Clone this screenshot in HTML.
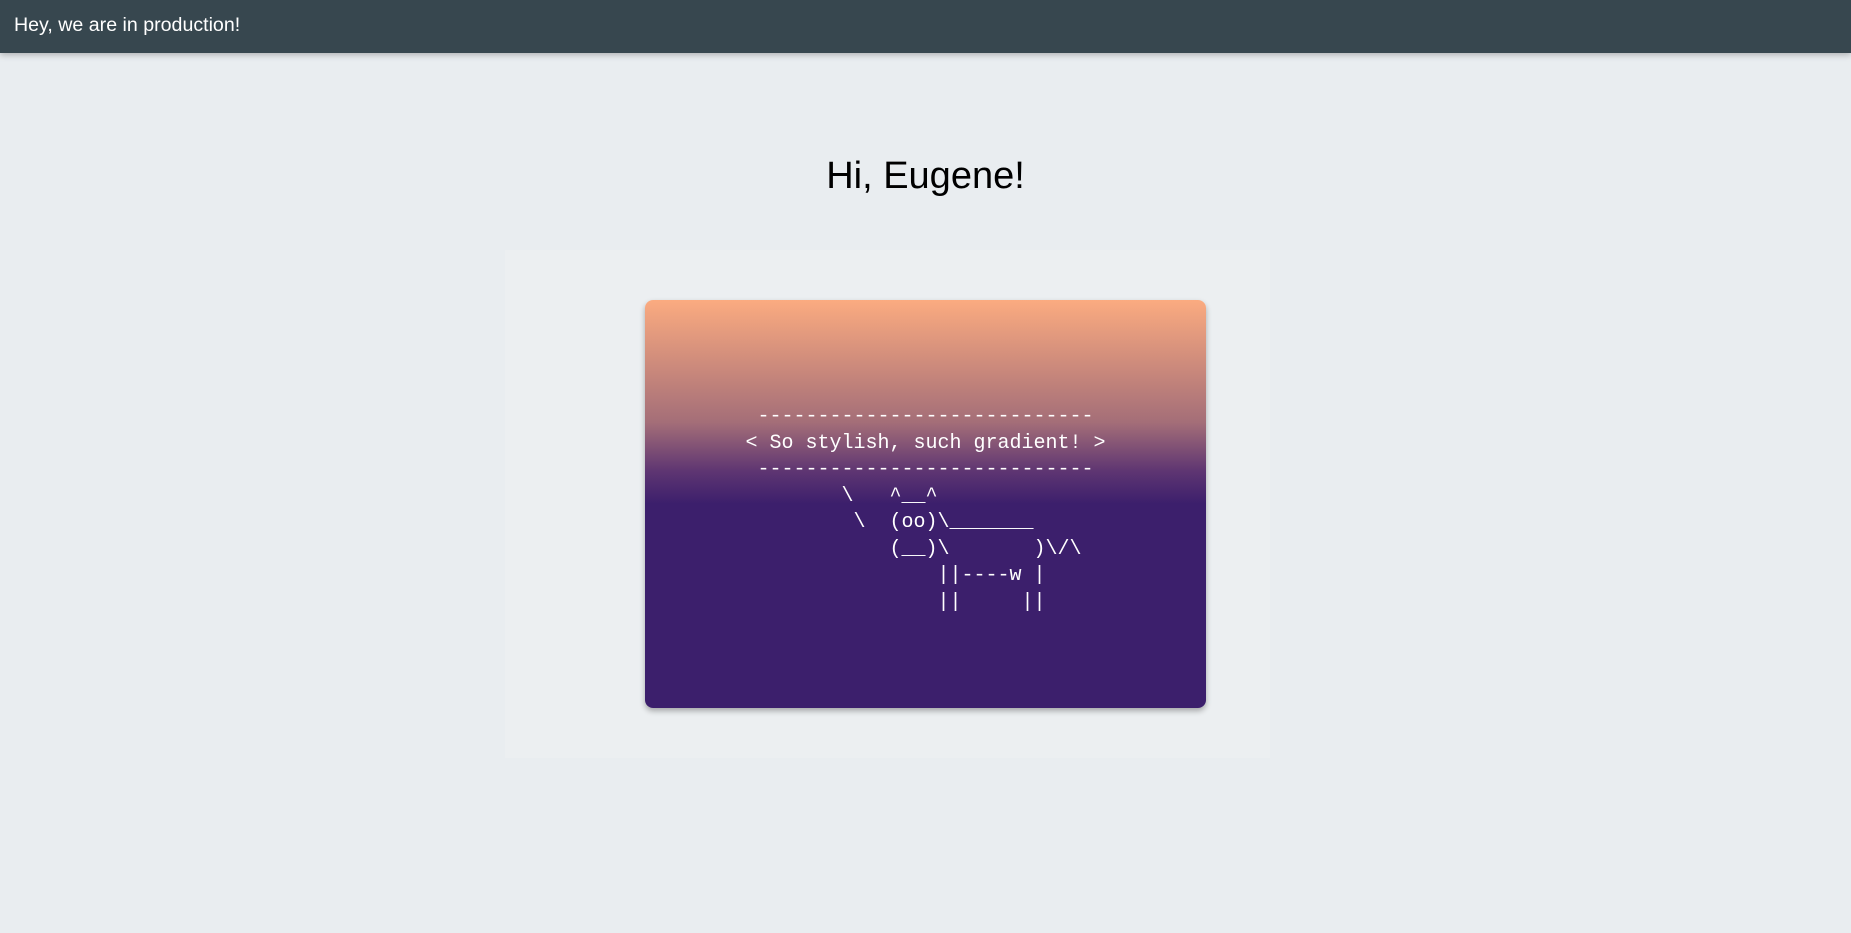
<!DOCTYPE html>
<html><head><meta charset="utf-8"><style>
html,body{margin:0;padding:0}
body{width:1851px;height:933px;background:#e9edf0;font-family:"Liberation Sans",Roboto,sans-serif;position:relative;overflow:hidden}
.hdr{position:absolute;left:0;top:0;width:1851px;height:53px;background:#37474f;box-shadow:0 2px 6px rgba(0,0,0,.25);color:#fff;font-size:19.6px;line-height:51px;padding-left:14px;box-sizing:border-box;z-index:2}
h1{position:absolute;top:151px;left:0;width:1851px;margin:0;text-align:center;font-weight:400;font-size:38px;color:#000;line-height:50px}
.panel{position:absolute;left:505px;top:250px;width:765px;height:508px;background:#eceff1}
.card{position:absolute;left:645px;top:300px;width:561px;height:408px;border-radius:8px;background:linear-gradient(180deg,#fbab80 0%,#a46e78 30%,#5e3572 42%,#3c1f6c 50%,#3c1f6c 100%);box-shadow:0 3px 6px rgba(0,0,0,.3);display:flex;align-items:center;justify-content:center}
pre{margin:0;color:#fff;font-family:"Liberation Mono",monospace;font-size:20px;line-height:26.5px;transform:translateY(6px)}
</style></head><body>
<div class="hdr">Hey, we are in production!</div>
<h1>Hi, Eugene!</h1>
<div class="panel"></div>
<div class="card"><pre> ----------------------------
&lt; So stylish, such gradient! &gt;
 ----------------------------
        \   ^__^
         \  (oo)\_______
            (__)\       )\/\
                ||----w |
                ||     ||</pre></div>
</body></html>
